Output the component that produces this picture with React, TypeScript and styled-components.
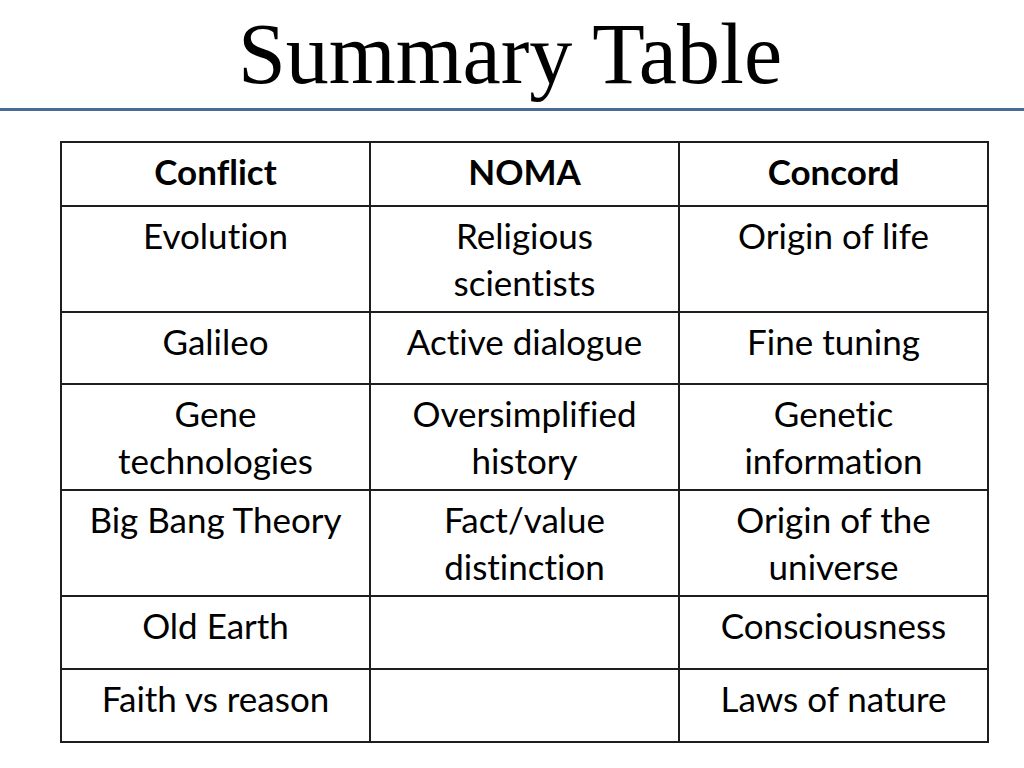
import React from "react";
import styled, { createGlobalStyle } from "styled-components";

const GlobalStyle = createGlobalStyle`
  html, body {
    margin: 0;
    padding: 0;
    background: #ffffff;
  }
  body {
    width: 1024px;
    height: 768px;
    overflow: hidden;
  }
`;

const Slide = styled.div`
  width: 1024px;
  height: 768px;
  background: #ffffff;
  display: flex;
  flex-direction: column;
`;

const TitleBar = styled.header`
  height: 111px;
  box-sizing: border-box;
  padding-top: 11px;
  border-bottom: 3px solid #4a6a98;
  display: flex;
  justify-content: center;
`;

const Title = styled.h1`
  margin: 0 0 0 -4px;
  font-family: "Liberation Serif", "Times New Roman", serif;
  font-weight: 400;
  font-size: 86px;
  line-height: 86px;
  color: #000000;
`;

const TableWrap = styled.div`
  padding: 30px 0 0 60px;
`;

const Table = styled.table`
  width: 929px;
  border-collapse: collapse;
  table-layout: fixed;
  font-family: Lato, "Open Sans", sans-serif;
  font-size: 35px;
  line-height: 47px;
  font-variant-ligatures: no-common-ligatures;
  color: #000000;
`;

const Row = styled.tr<{ $h: number }>`
  height: ${(p) => p.$h}px;
`;

const Cell = styled.td`
  border: 2px solid #1e1e1e;
  padding: 5px 4px 0;
  vertical-align: top;
  text-align: center;
  font-weight: 400;
`;

const HeadCell = styled(Cell).attrs({ as: "th" })`
  font-weight: 700;
`;

type RowData = { h: number; cells: React.ReactNode[] };

const rows: RowData[] = [
  { h: 106, cells: ["Evolution", <>Religious<br />scientists</>, "Origin of life"] },
  { h: 72, cells: ["Galileo", "Active dialogue", "Fine tuning"] },
  {
    h: 106,
    cells: [
      <>Gene<br />technologies</>,
      <>Oversimplified<br />history</>,
      <>Genetic<br />information</>,
    ],
  },
  {
    h: 106,
    cells: [
      "Big Bang Theory",
      <>Fact/value<br />distinction</>,
      <>Origin of the<br />universe</>,
    ],
  },
  { h: 73, cells: ["Old Earth", "", "Consciousness"] },
  { h: 73, cells: ["Faith vs reason", "", "Laws of nature"] },
];

export default function App() {
  return (
    <Slide>
      <GlobalStyle />
      <TitleBar>
        <Title>Summary Table</Title>
      </TitleBar>
      <TableWrap>
        <Table>
          <thead>
            <Row $h={64}>
              <HeadCell>Conflict</HeadCell>
              <HeadCell>NOMA</HeadCell>
              <HeadCell>Concord</HeadCell>
            </Row>
          </thead>
          <tbody>
            {rows.map((r, i) => (
              <Row key={i} $h={r.h}>
                {r.cells.map((c, j) => (
                  <Cell key={j}>{c}</Cell>
                ))}
              </Row>
            ))}
          </tbody>
        </Table>
      </TableWrap>
    </Slide>
  );
}
